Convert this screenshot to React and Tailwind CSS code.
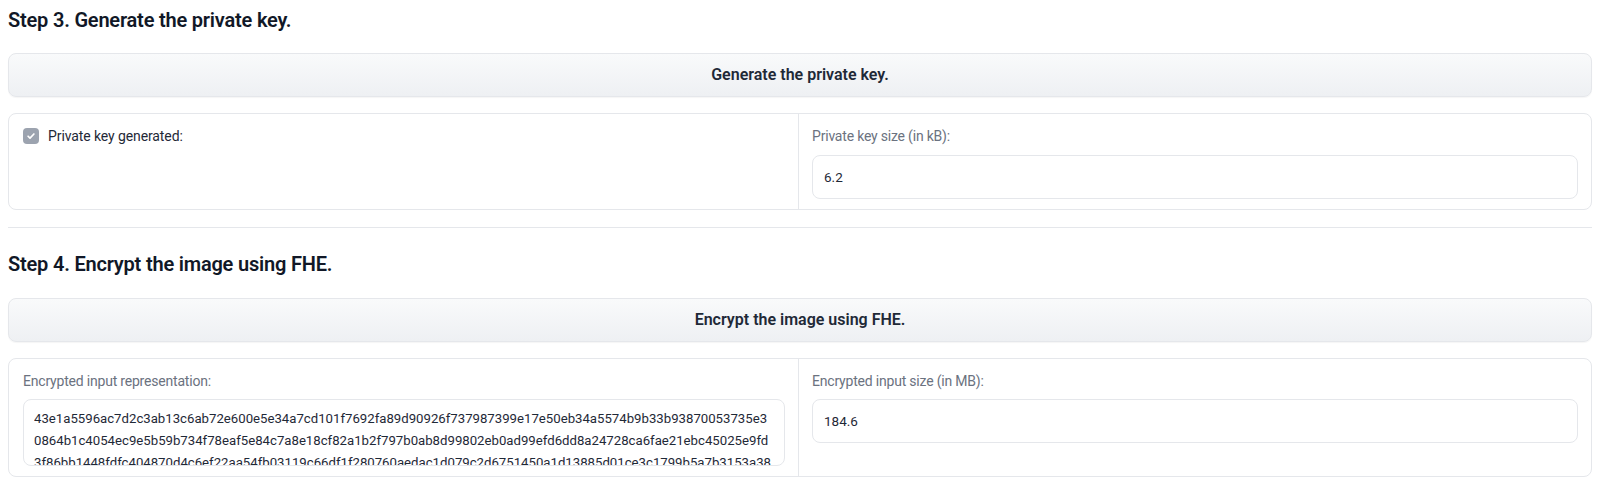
import React from 'react';

const hexLines = [
  "43e1a5596ac7d2c3ab13c6ab72e600e5e34a7cd101f7692fa89d90926f737987399e17e50eb34a5574b9b33b93870053735e3",
  "0864b1c4054ec9e5b59b734f78eaf5e84c7a8e18cf82a1b2f797b0ab8d99802eb0ad99efd6dd8a24728ca6fae21ebc45025e9fd",
  "3f86bb1448fdfc404870d4c6ef22aa54fb03119c66df1f280760aedac1d079c2d6751450a1d13885d01ce3c1799b5a7b3153a38",
];

function StepTitle({ children }) {
  return (
    <h3 className="text-[20px] leading-[28px] font-semibold text-[#111827] tracking-[-0.2px]">{children}</h3>
  );
}

function ActionButton({ children }) {
  return (
    <button className="w-full h-[44px] rounded-lg border border-[#e5e7eb] bg-gradient-to-b from-[#f9fafb] to-[#eef0f3] text-[16px] font-semibold text-[#1f2937] shadow-[0_1px_1px_rgba(0,0,0,0.04)]">
      {children}
    </button>
  );
}

function Label({ children }) {
  return <div className="text-[14px] leading-[20px] text-[#6b7280] tracking-[-0.2px]">{children}</div>;
}

function ValueBox({ value }) {
  return (
    <div className="h-[44px] rounded-lg border border-[#e5e7eb] bg-white px-[11px] flex items-center text-[13.5px] text-[#1f2937]">
      {value}
    </div>
  );
}

export default function App() {
  return (
    <div className="bg-white w-[1600px] h-[490px] px-2 pt-[6px] overflow-hidden" style={{ fontFamily: 'Roboto, "Noto Sans", sans-serif' }}>
      <StepTitle>Step 3. Generate the private key.</StepTitle>
      <div className="mt-[19px]">
        <ActionButton>Generate the private key.</ActionButton>
      </div>
      <div className="mt-4 h-[97px] rounded-lg border border-[#e5e7eb] flex">
        <div className="w-[790px] border-r border-[#e5e7eb] px-[14px] pt-3">
          <label className="flex items-center gap-[9px] h-[20px]">
            <span className="w-4 h-4 rounded-[4px] bg-[#9ca3af] flex items-center justify-center">
              <svg width="10" height="10" viewBox="0 0 12 12" fill="none">
                <path d="M2.5 6.3l2.3 2.3 4.7-5" stroke="white" strokeWidth="2" strokeLinecap="round" strokeLinejoin="round" />
              </svg>
            </span>
            <span className="text-[14px] text-[#1f2937] tracking-[-0.1px]">Private key generated:</span>
          </label>
        </div>
        <div className="flex-1 px-[13px] pt-3">
          <Label>Private key size (in kB):</Label>
          <div className="mt-[9px]">
            <ValueBox value="6.2" />
          </div>
        </div>
      </div>
      <div className="mt-[17px] border-t border-[#e5e7eb]"></div>
      <div className="mt-[22px]">
        <StepTitle>Step 4. Encrypt the image using FHE.</StepTitle>
      </div>
      <div className="mt-[20px]">
        <ActionButton>Encrypt the image using FHE.</ActionButton>
      </div>
      <div className="mt-4 h-[119px] rounded-lg border border-[#e5e7eb] flex">
        <div className="w-[790px] border-r border-[#e5e7eb] pl-[14px] pr-[13px] pt-3">
          <Label>Encrypted input representation:</Label>
          <div className="mt-2 h-[67px] rounded-lg border border-[#e5e7eb] bg-white px-[10px] pt-[8px] overflow-hidden">
            {hexLines.map((line) => (
              <div key={line} className="text-[13.2px] leading-[22px] text-[#1f2937] whitespace-nowrap overflow-hidden">
                {line}
              </div>
            ))}
          </div>
        </div>
        <div className="flex-1 px-[13px] pt-3">
          <Label>Encrypted input size (in MB):</Label>
          <div className="mt-2">
            <ValueBox value="184.6" />
          </div>
        </div>
      </div>
    </div>
  );
}
